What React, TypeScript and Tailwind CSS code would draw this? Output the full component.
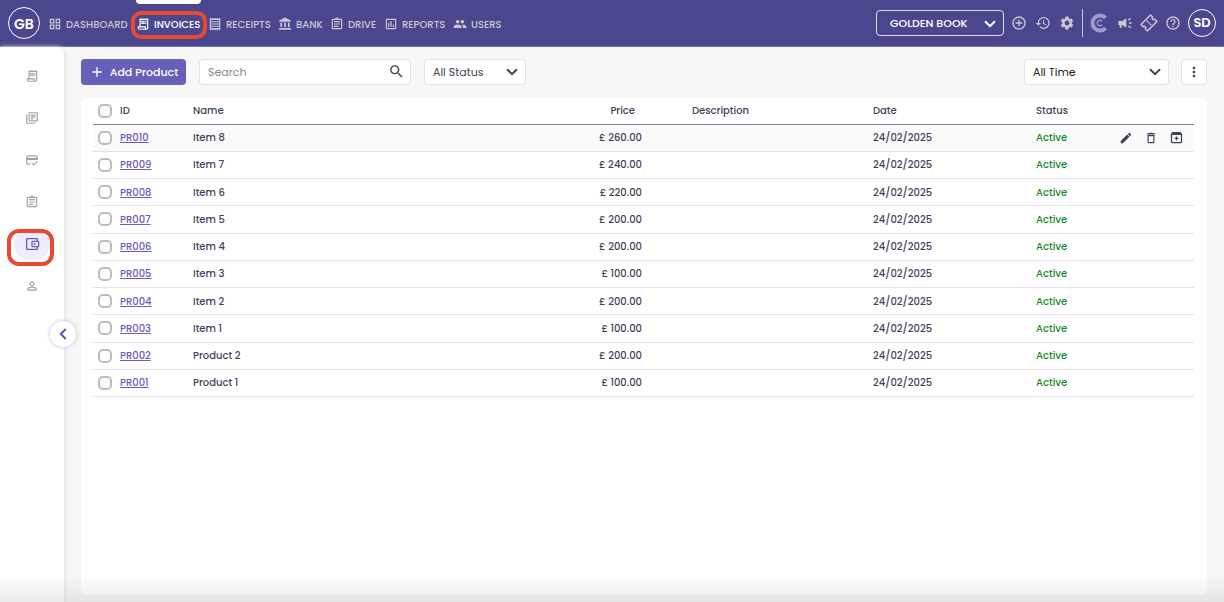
import type { ReactNode } from "react";
import clsx from "clsx";
import {
  MdAccountBalance,
  MdAdd,
  MdAddCircleOutline,
  MdCreditScore,
  MdDeleteOutline,
  MdEdit,
  MdGroup,
  MdHelpOutline,
  MdHistory,
  MdMoreVert,
  MdOutlineAssessment,
  MdOutlineAssignment,
  MdOutlineGridView,
  MdOutlineLibraryBooks,
  MdOutlineReceiptLong,
  MdPersonOutline,
  MdSearch,
  MdSettings,
} from "react-icons/md";

interface NavItem {
  label: string;
  icon: ReactNode;
  width: string;
  active?: boolean;
}

interface Product {
  id: string;
  name: string;
  price: string;
  date: string;
  status: string;
}

const Chevron = ({ className }: { className?: string }) => (
  <svg viewBox="0 0 12 8" className={clsx("h-2 w-3", className)} fill="none" stroke="currentColor" strokeWidth="2">
    <path d="M1 1.2l5 5 5-5" />
  </svg>
);

const ReceiptIcon = () => (
  <svg viewBox="0 0 24 24" className="size-[14px]" fill="none" stroke="currentColor" strokeWidth="2">
    <path d="M3 2.5h18M3 21.5h18" strokeDasharray="2 1.2" />
    <path d="M4 3v18M20 3v18M4 4h16M4 20h16M5 8.200h14M5 12h14M5 15.800h14" />
  </svg>
);

const WalletIcon = () => (
  <svg viewBox="0 0 24 24" className="size-4" fill="none" stroke="currentColor" strokeWidth="2">
    <path d="M20 8V5a1 1 0 0 0-1-1H5a1 1 0 0 0-1 1v14a1 1 0 0 0 1 1h14a1 1 0 0 0 1-1v-3" />
    <rect x="12" y="8" width="10" height="8" rx="1" />
    <circle cx="16" cy="12" r="1.5" fill="currentColor" stroke="none" />
  </svg>
);

const ArchiveIcon = () => (
  <svg viewBox="0 0 24 24" className="size-[15px]" fill="none" stroke="currentColor" strokeWidth="2">
    <path d="M4 7.5V19a1 1 0 0 0 1 1h14a1 1 0 0 0 1-1V7.5" />
    <path d="M4 7L6 4h12l2 3z" fill="currentColor" />
    <path d="M12 10.500v6M9 13.500h6" />
  </svg>
);

const CreditIcon = () => (
  <svg viewBox="0 0 20 20" className="size-5 text-[#9d9acb]" fill="none" stroke="currentColor">
    <path d="M15.600 4.800A7.600 7.600 0 1 0 15.600 15.200" strokeWidth="4" />
    <path d="M12.200 8.200A2.800 2.800 0 1 0 12.200 11.800" strokeWidth="1.500" />
  </svg>
);

const MegaphoneIcon = () => (
  <svg viewBox="0 0 24 24" className="size-4" fill="currentColor" stroke="currentColor">
    <path d="M2 9h6l6-4v14l-6-4H7v4H4v-4H2z" stroke="none" />
    <path d="M18 12h4M17 7.500l3.500-2.500M17 16.500l3.500 2.500" fill="none" strokeWidth="2" />
  </svg>
);

const TicketIcon = () => (
  <svg viewBox="0 0 24 24" className="size-[18px]" fill="none" stroke="currentColor" strokeWidth="2">
    <g transform="rotate(-45 12 12)">
      <path d="M3 6h18v4a2 2 0 0 0 0 4v4H3v-4a2 2 0 0 0 0-4z" strokeLinejoin="round" />
      <path d="M12 8v2M12 11v2M12 14v2" />
    </g>
  </svg>
);

const navItems: NavItem[] = [
  { label: "DASHBOARD", icon: <MdOutlineGridView />, width: "w-[88px]" },
  { label: "INVOICES", icon: <MdOutlineReceiptLong />, width: "w-[72px]", active: true },
  { label: "RECEIPTS", icon: <ReceiptIcon />, width: "w-[70px]" },
  { label: "BANK", icon: <MdAccountBalance />, width: "w-[52px]" },
  { label: "DRIVE", icon: <MdOutlineAssignment />, width: "w-[54px]" },
  { label: "REPORTS", icon: <MdOutlineAssessment />, width: "w-[69px]" },
  { label: "USERS", icon: <MdGroup />, width: "w-[50px]" },
];

const sideItems = [
  { label: "Invoices", icon: <MdOutlineReceiptLong /> },
  { label: "Recurring", icon: <MdOutlineLibraryBooks /> },
  { label: "Credit notes", icon: <MdCreditScore /> },
  { label: "Quotes", icon: <MdOutlineAssignment /> },
  { label: "Products", icon: <WalletIcon />, active: true },
  { label: "Customers", icon: <MdPersonOutline /> },
];

const products: Product[] = [
  { id: "PR010", name: "Item 8", price: "£ 260.00", date: "24/02/2025", status: "Active" },
  { id: "PR009", name: "Item 7", price: "£ 240.00", date: "24/02/2025", status: "Active" },
  { id: "PR008", name: "Item 6", price: "£ 220.00", date: "24/02/2025", status: "Active" },
  { id: "PR007", name: "Item 5", price: "£ 200.00", date: "24/02/2025", status: "Active" },
  { id: "PR006", name: "Item 4", price: "£ 200.00", date: "24/02/2025", status: "Active" },
  { id: "PR005", name: "Item 3", price: "£ 100.00", date: "24/02/2025", status: "Active" },
  { id: "PR004", name: "Item 2", price: "£ 200.00", date: "24/02/2025", status: "Active" },
  { id: "PR003", name: "Item 1", price: "£ 100.00", date: "24/02/2025", status: "Active" },
  { id: "PR002", name: "Product 2", price: "£ 200.00", date: "24/02/2025", status: "Active" },
  { id: "PR001", name: "Product 1", price: "£ 100.00", date: "24/02/2025", status: "Active" },
];

const Header = () => (
  <header className="flex h-[47px] shrink-0 items-center border-b border-[#7874b4] bg-[#4b478f] px-2 text-[#c9c8d0]">
    <a
      href="#"
      className="flex size-8 shrink-0 items-center justify-center rounded-full border border-white pt-px text-sm font-semibold text-white"
    >
      GB
    </a>
    <nav className="ml-2 flex h-full items-center">
      {navItems.map((item) => (
        <a
          key={item.label}
          href="#"
          className={clsx(
            "relative flex h-full shrink-0 items-center gap-1 pt-[2px] text-[10px] font-medium whitespace-nowrap",
            item.width,
            item.active && "text-white",
          )}
        >
          <span className="text-sm">{item.icon}</span>
          {item.label}
          {item.active && (
            <>
              <span className="absolute top-0 left-0 h-1 w-[65px] rounded-b bg-white" />
              <span className="absolute top-[11px] -left-[5px] h-7 w-[76px] rounded-[10px] border-4 border-[#e64a33]" />
            </>
          )}
        </a>
      ))}
    </nav>
    <div className="ml-auto flex items-center text-base">
      <div className="relative text-white">
        <select
          aria-label="Company"
          className="block h-[26px] w-32 appearance-none rounded border border-[#dcdbe8] pl-[13px] text-[11px] font-medium"
        >
          <option>GOLDEN BOOK</option>
        </select>
        <Chevron className="pointer-events-none absolute top-[10px] right-2" />
      </div>
      <div className="ml-[7px] flex items-center gap-2">
        <button aria-label="Add"><MdAddCircleOutline /></button>
        <button aria-label="History"><MdHistory /></button>
        <button aria-label="Settings"><MdSettings /></button>
      </div>
      <div className="ml-[7px] flex h-7 items-center gap-[7px] border-l border-[#c9c8d6] pl-[7px]">
        <button aria-label="Credits"><CreditIcon /></button>
        <button aria-label="News"><MegaphoneIcon /></button>
        <button aria-label="Tickets"><TicketIcon /></button>
        <button aria-label="Help"><MdHelpOutline /></button>
        <button
          aria-label="Account"
          className="flex size-7 items-center justify-center rounded-full border border-white text-[13px] font-semibold text-white"
        >
          SD
        </button>
      </div>
    </div>
  </header>
);

const Sidebar = () => (
  <aside className="relative w-16 shrink-0 rounded-tr-lg bg-white shadow-[1px_0_4px_#dfe1f2]">
    <ul className="flex flex-col items-center gap-[10px] pt-[13px]">
      {sideItems.map((item) => (
        <li key={item.label} className="relative">
          <a
            href="#"
            aria-label={item.label}
            className={clsx(
              "flex h-8 w-9 items-center justify-center rounded-full text-sm",
              item.active ? "bg-[#efedfd] text-[#6660b8]" : "text-[#a3a3a3]",
            )}
          >
            {item.icon}
          </a>
          {item.active && (
            <span className="pointer-events-none absolute top-px -right-1 -bottom-[6px] -left-[7px] rounded-xl border-4 border-[#e64a33]" />
          )}
        </li>
      ))}
    </ul>
    <button
      aria-label="Collapse menu"
      className="absolute top-[274px] -right-3 flex size-[26px] items-center justify-center rounded-full bg-white text-[#5c56b5] shadow-[0_0_4px_#c4c4cc]"
    >
      <Chevron className="rotate-90" />
    </button>
  </aside>
);

const Toolbar = () => (
  <div className="flex h-[26px] items-center text-[11px] text-[#3d4459]">
    <button className="flex h-full w-[105px] items-center justify-center gap-[5px] rounded bg-[#6660b8] font-medium whitespace-nowrap text-white">
      <MdAdd className="size-4" />
      Add Product
    </button>
    <div className="relative ml-[13px] h-full">
      <input
        type="text"
        aria-label="Search"
        placeholder="Search"
        className="h-full w-[212px] rounded border border-[#e2e2ec] bg-white pr-8 pl-2 placeholder:text-[#8a8a8a]"
      />
      <MdSearch className="absolute top-[4px] right-[6px] size-[17px]" />
    </div>
    <div className="relative ml-[13px] h-full">
      <select
        aria-label="Status"
        className="h-full w-[102px] appearance-none rounded border border-[#e2e2ec] bg-white pl-2"
      >
        <option>All Status</option>
      </select>
      <Chevron className="pointer-events-none absolute top-[9px] right-2" />
    </div>
    <div className="relative ml-auto h-full">
      <select
        aria-label="Period"
        className="h-full w-[145px] appearance-none rounded border border-[#e2e2ec] bg-white pl-2 text-[#222222]"
      >
        <option>All Time</option>
      </select>
      <Chevron className="pointer-events-none absolute top-[9px] right-2" />
    </div>
    <button
      aria-label="More"
      className="ml-3 flex h-full w-[26px] items-center justify-center rounded border border-[#e2e2ec] bg-white"
    >
      <MdMoreVert className="size-4" />
    </button>
  </div>
);

const Checkbox = ({ label }: { label: string }) => (
  <input
    type="checkbox"
    aria-label={label}
    className="ml-[5px] block size-[14px] appearance-none rounded-[5px] border-2 border-[#bdbdbd] bg-white checked:bg-[#6660b8]"
  />
);

const ProductTable = () => (
  <table className="h-[299px] w-full table-fixed border-collapse text-left text-[10px] font-medium text-[#3d4459]">
    <colgroup>
      <col className="w-[27px]" />
      <col className="w-[73px]" />
      <col />
      <col className="w-[100px]" />
      <col className="w-[231px]" />
      <col className="w-[163px]" />
      <col className="w-[80px]" />
      <col className="w-[78px]" />
    </colgroup>
    <thead>
      <tr className="h-[26px] border-b border-[#7f8496]">
        <th><Checkbox label="Select all" /></th>
        <th className="font-medium">ID</th>
        <th className="font-medium">Name</th>
        <th className="pr-[7px] text-right font-medium">Price</th>
        <th className="pl-[50px] font-medium">Description</th>
        <th className="font-medium">Date</th>
        <th className="font-medium">Status</th>
        <th aria-label="Actions" />
      </tr>
    </thead>
    <tbody>
      {products.map((product, idx) => (
        <tr key={product.id} className={clsx("border-b border-[#e2e2e8]", idx === 0 && "bg-[#fafafa]")}>
          <td><Checkbox label={`Select ${product.id}`} /></td>
          <td>
            <a href="#" className="text-[#6660b8] underline">{product.id}</a>
          </td>
          <td>{product.name}</td>
          <td className="text-right">{product.price}</td>
          <td />
          <td>{product.date}</td>
          <td className="text-[#128a26]">{product.status}</td>
          <td>
            {idx === 0 && (
              <div className="flex items-center justify-end gap-[11px] pr-[10px] text-sm">
                <button aria-label="Edit"><MdEdit /></button>
                <button aria-label="Delete"><MdDeleteOutline /></button>
                <button aria-label="Archive"><ArchiveIcon /></button>
              </div>
            )}
          </td>
        </tr>
      ))}
    </tbody>
  </table>
);

export default function App() {
  return (
    <div className="relative flex h-screen flex-col overflow-hidden bg-[#f7f7f7] font-['Poppins','Inter',sans-serif]">
      <Header />
      <div className="flex min-h-0 flex-1">
        <Sidebar />
        <main className="flex min-w-0 flex-1 flex-col gap-[13px] px-[17px] pt-3 pb-[7px]">
          <Toolbar />
          <section className="flex-1 rounded-md bg-white pr-[13px] pl-3">
            <ProductTable />
          </section>
        </main>
      </div>
      <div className="pointer-events-none absolute inset-x-0 bottom-0 h-7 bg-linear-to-b from-transparent to-black/8" />
    </div>
  );
}
